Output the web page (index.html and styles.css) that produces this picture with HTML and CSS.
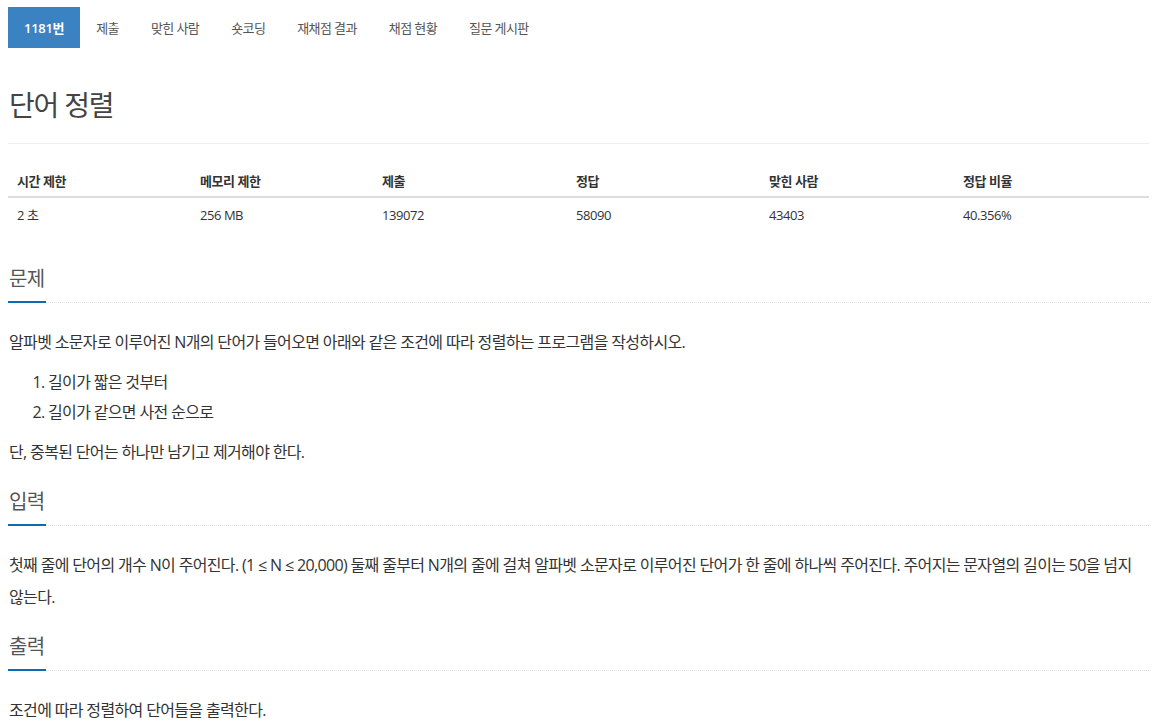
FILE: index.html
```html
<!DOCTYPE html>
<html lang="ko">
<head>
<meta charset="utf-8">
<title>단어 정렬</title>
<link rel="stylesheet" href="styles.css">
</head>
<body>
<div class="container">
  <ul class="tabs">
    <li class="tab active">1181번</li>
    <li class="tab">제출</li>
    <li class="tab">맞힌 사람</li>
    <li class="tab">숏코딩</li>
    <li class="tab">재채점 결과</li>
    <li class="tab">채점 현황</li>
    <li class="tab">질문 게시판</li>
  </ul>

  <div class="page-header">
    <h1 class="title">단어 정렬</h1>
  </div>

  <div class="info-table">
    <div class="info-row info-head">
      <div class="cell">시간 제한</div>
      <div class="cell">메모리 제한</div>
      <div class="cell">제출</div>
      <div class="cell">정답</div>
      <div class="cell">맞힌 사람</div>
      <div class="cell">정답 비율</div>
    </div>
    <div class="info-row">
      <div class="cell">2 초</div>
      <div class="cell">256 MB</div>
      <div class="cell">139072</div>
      <div class="cell">58090</div>
      <div class="cell">43403</div>
      <div class="cell">40.356%</div>
    </div>
  </div>

  <section class="section first">
    <h2 class="headline"><span>문제</span></h2>
    <div class="text">
      <p>알파벳 소문자로 이루어진 N개의 단어가 들어오면 아래와 같은 조건에 따라 정렬하는 프로그램을 작성하시오.</p>
      <ol>
        <li>길이가 짧은 것부터</li>
        <li>길이가 같으면 사전 순으로</li>
      </ol>
      <p>단, 중복된 단어는 하나만 남기고 제거해야 한다.</p>
    </div>
  </section>

  <section class="section">
    <h2 class="headline"><span>입력</span></h2>
    <div class="text">
      <p>첫째 줄에 단어의 개수 N이 주어진다. (1 ≤ N ≤ 20,000) 둘째 줄부터 N개의 줄에 걸쳐 알파벳 소문자로 이루어진 단어가 한 줄에 하나씩 주어진다. 주어지는 문자열의 길이는 50을 넘지 않는다.</p>
    </div>
  </section>

  <section class="section">
    <h2 class="headline"><span>출력</span></h2>
    <div class="text">
      <p>조건에 따라 정렬하여 단어들을 출력한다.</p>
    </div>
  </section>
</div>
</body>
</html>
```

FILE: styles.css
```css
* {
  box-sizing: border-box;
}

body {
  margin: 0;
  background: #fff;
  color: #333;
  font-family: "Open Sans", "Noto Sans CJK KR", sans-serif;
}

.container {
  padding: 7px 7px 0 8px;
}

.tabs {
  list-style: none;
  margin: 0;
  padding: 0;
  display: flex;
  height: 41px;
}

.tab {
  padding: 0 16px;
  display: flex;
  align-items: center;
  font-size: 13px;
  color: #555;
  letter-spacing: -0.6px;
}

.tab.active {
  background: #3b82c3;
  color: #fff;
  font-weight: 600;
  letter-spacing: -0.3px;
}

.page-header {
  padding-top: 38px;
  border-bottom: 1px solid #eee;
  padding-bottom: 19px;
}

.title {
  margin: 0;
  font-size: 28px;
  font-weight: 400;
  line-height: 38px;
  color: #444;
  letter-spacing: -1.2px;
  padding-left: 1px;
}

.info-table {
  margin-top: 20px;
  font-size: 13px;
  letter-spacing: -0.45px;
}

.info-row {
  display: grid;
  grid-template-columns: 183px 182px 194px 193px 194px 1fr;
}

.info-head {
  font-weight: 700;
  border-bottom: 2px solid #ddd;
}

.cell {
  padding: 8px 8px 8px 9px;
  line-height: 18px;
}

.info-head .cell {
  padding: 8px 8px 6px 9px;
}

.section {
  margin-top: 19px;
}

.section.first {
  margin-top: 32px;
}

.headline {
  margin: 0;
  display: flex;
  font-size: 20px;
  font-weight: 400;
  color: #555;
  line-height: 30px;
  border-bottom: 1px dotted #ddd;
  letter-spacing: -0.6px;
}

.headline span {
  display: block;
  padding: 0 1px 7px 1px;
  border-bottom: 2px solid #0b6cb5;
  margin-bottom: -1px;
}

.text {
  padding-top: 23px;
  font-size: 16px;
  line-height: 32px;
  letter-spacing: -0.65px;
}

.text p {
  margin: 0 0 9px;
  padding-left: 1px;
}

.text p:last-child {
  margin-bottom: 0;
}

.text ol {
  margin: 0 0 9px;
  padding-left: 40px;
  line-height: 30px;
}
```
